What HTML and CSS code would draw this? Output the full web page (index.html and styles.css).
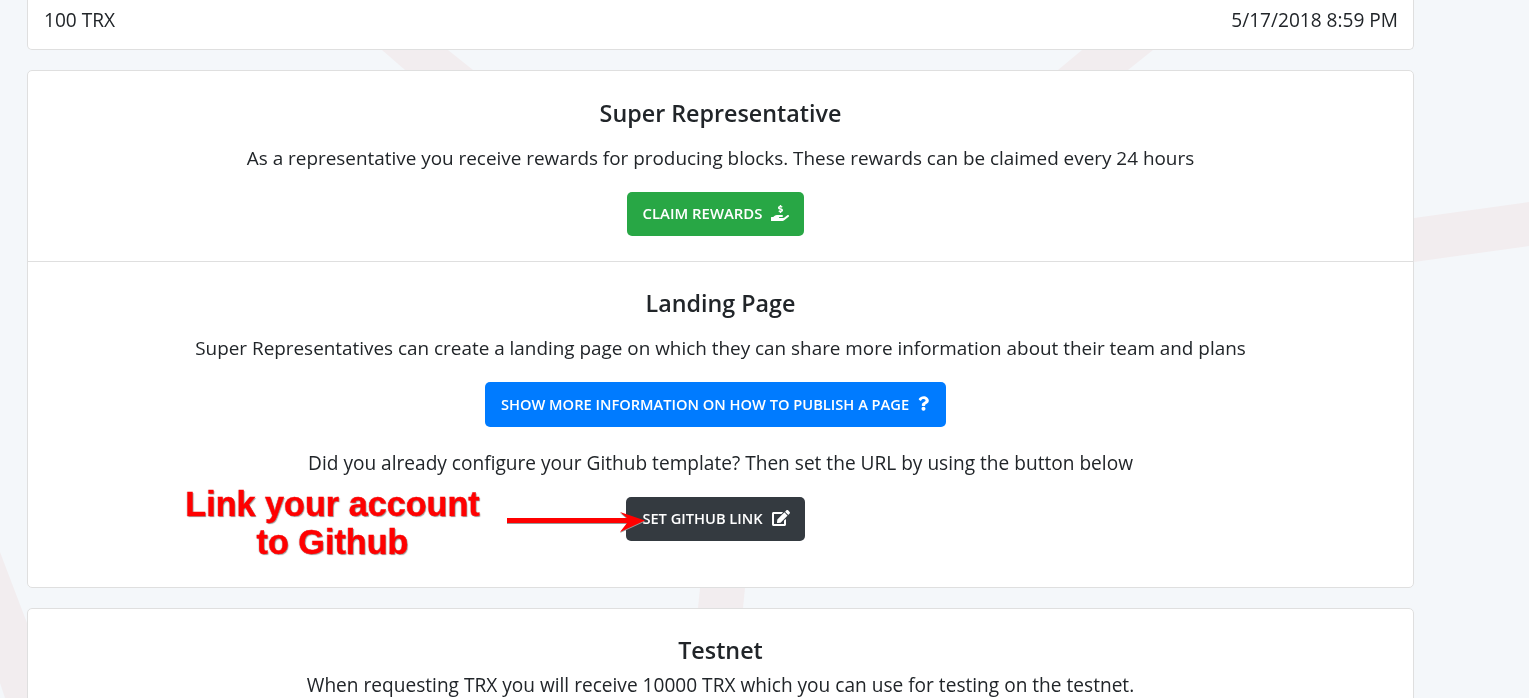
FILE: index.html
```html
<!DOCTYPE html>
<html lang="en">
<head>
  <meta charset="UTF-8" />
  <title>Account</title>
  <link rel="stylesheet" href="styles.css">
</head>
<body>
  <svg class="bg-shapes" width="1529" height="698" viewBox="0 0 1529 698">
    <polygon points="382,50 448,50 473,70 405,70" />
    <polygon points="1082,50 1153,50 1128,70 1058,70" />
    <polygon points="1414,218 1529,202 1529,246 1414,262" />
    <polygon points="700,588 745,588 743,608 698,608" />
    <polygon points="0,552 3,560 27,623 27,698 5,698 0,683" />
  </svg>

  <div class="container">
    <div class="card card-top">
      <div class="row-between">
        <span>100 TRX</span>
        <span>5/17/2018 8:59 PM</span>
      </div>
    </div>

    <div class="card">
      <section class="card-section section-first">
        <h5>Super Representative</h5>
        <p>As a representative you receive rewards for producing blocks. These rewards can be claimed every 24 hours</p>
        <button type="button" class="btn btn-success">
          Claim Rewards
          <svg class="icon" viewBox="0 0 576 512"><path d="M271.06,144.3l54.27,14.3a8.59,8.59,0,0,1,6.63,8.1c0,4.6-4.09,8.4-9.12,8.4h-35.6a30,30,0,0,1-11.19-2.2c-5.24-2.2-11.28-1.7-15.3,2l-19,17.5a11.68,11.68,0,0,0-2.25,2.66,11.42,11.42,0,0,0,3.88,15.74,83.77,83.77,0,0,0,34.51,11.5V240c0,8.8,7.83,16,17.37,16h17.37c9.55,0,17.38-7.2,17.38-16V221.9c32.93-3.6,57.84-31,53.5-63-3.15-23-22.46-41.3-46.56-47.7L282.68,97.4a8.59,8.59,0,0,1-6.63-8.1c0-4.6,4.09-8.4,9.12-8.4h35.6A30,30,0,0,1,332,83.1c5.23,2.2,11.28,1.7,15.3-2l19-17.5A11.31,11.31,0,0,0,368.47,61a11.43,11.43,0,0,0-3.84-15.78,83.82,83.82,0,0,0-34.52-11.5V16c0-8.8-7.82-16-17.37-16H295.37C285.82,0,278,7.2,278,16V34.1c-32.83,3.6-57.84,31-53.5,63C227.59,120.1,247,138.4,271.06,144.3ZM565.27,328.1c-11.8-10.7-30.2-10-42.6,0L430.27,402a63.64,63.64,0,0,1-40,14H272a16,16,0,0,1,0-32h78.29c15.9,0,30.71-10.9,33.25-26.6a31.2,31.2,0,0,0,.46-5.46A32,32,0,0,0,352,320H192a117.66,117.66,0,0,0-74.1,26.29L71.4,384H16A16,16,0,0,0,0,400v96a16,16,0,0,0,16,16H372.77a64,64,0,0,0,40-14L564,377a32,32,0,0,0,1.28-48.9Z"/></svg>
        </button>
      </section>

      <section class="card-section section-landing">
        <h5>Landing Page</h5>
        <p>Super Representatives can create a landing page on which they can share more information about their team and plans</p>
        <button type="button" class="btn btn-primary">
          Show more information on how to publish a page
          <svg class="icon icon-question" viewBox="0 0 384 512"><path d="M202.021 0C122.202 0 70.503 32.703 29.914 91.026c-7.363 10.58-5.093 25.086 5.178 32.874l43.138 32.709c10.373 7.865 25.132 6.026 33.253-4.148 25.049-31.381 43.63-49.449 82.757-49.449 30.764 0 68.816 19.799 68.816 49.631 0 22.552-18.617 34.134-48.993 51.164-35.423 19.86-82.299 44.576-82.299 106.405V320c0 13.255 10.745 24 24 24h72.471c13.255 0 24-10.745 24-24v-5.773c0-42.86 125.268-44.645 125.268-160.627C377.504 66.256 286.902 0 202.021 0zM192 373.459c-38.196 0-69.271 31.075-69.271 69.271 0 38.195 31.075 69.27 69.271 69.27s69.271-31.075 69.271-69.271-31.075-69.27-69.271-69.27z"/></svg>
        </button>
        <p class="github-text">Did you already configure your Github template? Then set the URL by using the button below</p>
        <button type="button" class="btn btn-dark">
          Set Github Link
          <svg class="icon" viewBox="0 0 576 512"><path d="M402.6 83.2l90.2 90.2c3.8 3.8 3.8 10 0 13.8L274.4 405.6l-92.8 10.3c-12.4 1.4-22.9-9.1-21.5-21.5l10.3-92.8L388.8 83.2c3.8-3.8 10-3.8 13.8 0zm162-22.9l-48.8-48.8c-15.2-15.2-39.9-15.2-55.2 0l-35.4 35.4c-3.8 3.8-3.8 10 0 13.8l90.2 90.2c3.8 3.8 10 3.8 13.8 0l35.4-35.4c15.2-15.3 15.2-40 0-55.2zM384 346.2V448H64V128h229.8c3.2 0 6.2-1.3 8.5-3.5l40-40c7.6-7.6 2.2-20.5-8.5-20.5H48C21.5 64 0 85.5 0 112v352c0 26.5 21.5 48 48 48h352c26.5 0 48-21.5 48-48V306.2c0-10.7-12.9-16-20.5-8.5l-40 40c-2.2 2.3-3.5 5.3-3.5 8.5z"/></svg>
        </button>
        <div class="note">Link your account<br>to Github</div>
        <svg class="note-arrow" width="150" height="28" viewBox="0 0 150 28">
          <polygon points="0,9 120,9 113,3 138,11.5 113,23 120,14 0,14" />
        </svg>
      </section>
    </div>

    <div class="card">
      <section class="card-section section-testnet">
        <h5>Testnet</h5>
        <p>When requesting TRX you will receive 10000 TRX which you can use for testing on the testnet.</p>
      </section>
    </div>
  </div>
</body>
</html>
```

FILE: styles.css
```css
html, body {
  height: 698px;
  overflow: hidden;
}
body {
  font-family: 'Open Sans', 'Noto Sans', sans-serif;
  margin: 0;
  background: #f4f7fa;
  color: #212529;
  font-size: 18.9px;
}
.bg-shapes {
  position: fixed;
  top: 0;
  left: 0;
  z-index: -1;
}
.bg-shapes polygon {
  fill: #f2edef;
}
.container {
  width: 1387px;
  margin-left: 27px;
}
.card {
  background: #fff;
  border: 1px solid #dfdfdf;
  border-radius: 5px;
  margin-bottom: 20px;
}
.card-top {
  border-top: none;
  border-radius: 0 0 5px 5px;
  height: 49px;
}
.row-between {
  display: flex;
  justify-content: space-between;
  padding: 8px 15px 0 16px;
  font-size: 19.1px;
  line-height: 24px;
}
.card-section {
  position: relative;
  text-align: center;
}
.section-first {
  height: 191px;
  padding-top: 27px;
  box-sizing: border-box;
  border-bottom: 1px solid #dfdfdf;
}
.section-landing {
  height: 325px;
  padding-top: 26px;
  box-sizing: border-box;
}
.section-testnet {
  padding-top: 26px;
  height: 100px;
  box-sizing: border-box;
}
h5 {
  margin: 0;
  font-size: 23.3px;
  font-weight: 600;
  line-height: 30px;
}
p {
  margin: 18px 0 22px;
  line-height: 24px;
}
.section-testnet p {
  margin-top: 8px;
  font-size: 19.1px;
}
.github-text {
  margin: 24px 0 22px;
  font-size: 19.1px;
}
.btn {
  display: inline-flex;
  align-items: center;
  gap: 9px;
  height: 44px;
  padding: 0 15px 2px 16px;
  margin-right: 10px;
  border: none;
  border-radius: 5px;
  color: #fff;
  font-family: inherit;
  font-size: 14.65px;
  font-weight: 600;
  text-transform: uppercase;
  vertical-align: top;
}
.btn-success { background: #28a745; font-size: 14.9px; }
.btn-primary { background: #007bff; height: 45px; padding-right: 17px; }
.btn-dark { background: #343a40; }
.icon {
  width: 18px;
  height: 16px;
  fill: #fff;
}
.icon-question {
  width: 11px;
  height: 15px;
}
.note {
  position: absolute;
  left: 157px;
  top: 223px;
  width: 295px;
  color: #f00;
  font-family: 'Liberation Sans', sans-serif;
  font-size: 34.2px;
  font-weight: 700;
  line-height: 38px;
  -webkit-text-stroke: 0.4px #f00;
  text-shadow: 1px 1px 1px #999, -1px 0 1px #ddd;
}
.note-arrow {
  position: absolute;
  left: 479px;
  top: 247px;
  filter: drop-shadow(0 1px 0 #999);
}
.note-arrow polygon {
  fill: #f00;
}
```
